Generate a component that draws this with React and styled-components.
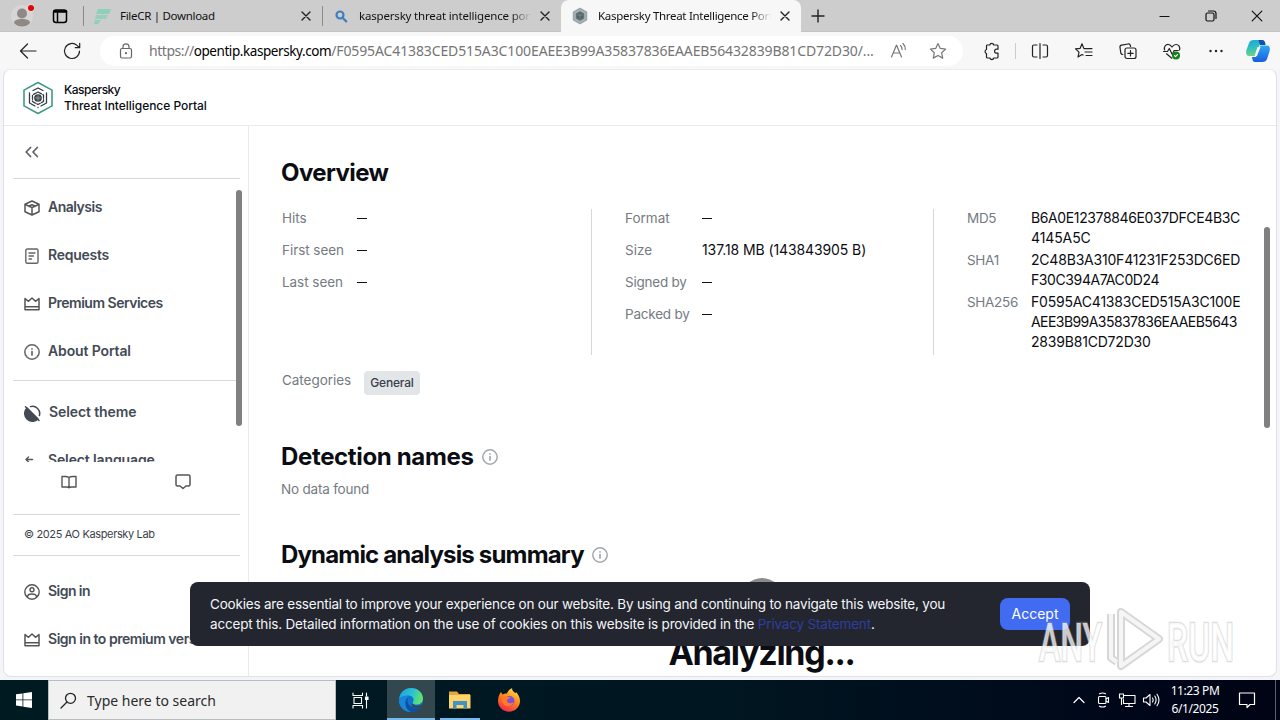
import React from "react";
import styled, { createGlobalStyle } from "styled-components";

const GlobalStyle = createGlobalStyle`
  * {
    box-sizing: border-box;
  }
  body {
    margin: 0;
    overflow: hidden;
    background-color: #f3f5f8;
  }
  svg {
    display: block;
    flex: none;
  }
`;

const Screen = styled.div`
  width: 1280px;
  height: 720px;
  display: flex;
  flex-direction: column;
  font-family: "Inter", "Liberation Sans", sans-serif;
  color: #0b0d12;
`;

/* ---------- browser ---------- */
const TabStrip = styled.div`
  height: 32px;
  display: flex;
  background-color: #cdcdcd;
  border-bottom: 1px solid #c4c4c4;
  font-family: "Noto Sans", "Open Sans", sans-serif;
  font-size: 11.5px;
  color: #111;
`;
const StripButtons = styled.div`
  width: 83px;
  display: flex;
  align-items: center;
  padding-left: 10px;
  gap: 16px;
`;
const Tab = styled.div`
  width: ${(p) => p.$w}px;
  height: 32px;
  display: flex;
  align-items: center;
  padding: 0 8px 0 ${(p) => p.$pad}px;
  background-color: ${(p) => (p.$active ? "#f7f7f7" : "transparent")};
  border-radius: 8px 8px 0 0;
`;
const TabDivider = styled.div`
  width: 1px;
  height: 20px;
  margin-top: 6px;
  background-color: #8a8a8a;
`;
const TabTitle = styled.span`
  flex: 1;
  margin: 0 6px 0 9px;
  line-height: 18px;
  overflow: hidden;
  white-space: nowrap;
  letter-spacing: ${(p) => p.$ls || 0}px;
  ${(p) =>
    p.$fade &&
    "mask-image: linear-gradient(to right, #000 calc(100% - 20px), transparent);"}
`;
const NewTab = styled.div`
  width: 34px;
  display: flex;
  align-items: center;
  justify-content: center;
`;
const WindowButtons = styled.div`
  margin-left: auto;
  display: flex;
  align-items: center;
`;
const WindowButton = styled.div`
  width: 46px;
  display: flex;
  justify-content: center;
`;
const Toolbar = styled.div`
  height: 37px;
  display: flex;
  align-items: center;
  padding-left: 16px;
  background-color: #f7f7f7;
`;
const NavButtons = styled.div`
  width: 84px;
  flex: none;
  display: flex;
  gap: 20px;
`;
const AddressBar = styled.div`
  width: 863px;
  flex: none;
  height: 30px;
  display: flex;
  align-items: center;
  padding: 0 15px 0 16px;
  border-radius: 15px;
  background-color: #fff;
  font-family: "Noto Sans", "Open Sans", sans-serif;
  font-size: 14px;
  color: #757575;
`;
const Url = styled.span`
  width: 730px;
  margin-left: 13px;
  white-space: nowrap;
  letter-spacing: ${(p) => p.$ls}px;
`;
const UrlScheme = styled.span`
  letter-spacing: -0.45px;
`;
const UrlHost = styled.span`
  font-size: 13.5px;
  letter-spacing: -0.42px;
  color: #000;
`;
const AddressIcons = styled.div`
  display: flex;
  gap: 20px;
  margin-left: auto;
`;
const ToolIcons = styled.div`
  display: flex;
  align-items: center;
  padding-left: 6px;
`;
const ToolCell = styled.div`
  width: ${(p) => p.$w || 44}px;
  display: flex;
  justify-content: center;
`;
const ToolDivider = styled.div`
  width: 1px;
  height: 16px;
  margin: 0 2px;
  background-color: #ccc;
`;

/* ---------- portal page ---------- */
const Page = styled.div`
  position: relative;
  height: 608px;
  margin: 0 3px 3px 3px;
  display: flex;
  flex-direction: column;
  border: 1px solid #dfe1e4;
  border-top-color: #ececec;
  border-radius: 8px;
  background-color: #fff;
  overflow: hidden;
`;
const Header = styled.div`
  height: 56px;
  flex: none;
  display: flex;
  align-items: center;
  gap: 10px;
  padding-left: 18px;
  border-bottom: 1px solid #e9eaec;
  font-size: 12px;
  font-weight: 500;
  line-height: 16px;
`;
const Brand = styled.div`
  letter-spacing: ${(p) => p.$ls}px;
`;
const Body = styled.div`
  flex: 1;
  display: flex;
  min-height: 0;
`;
const Sidebar = styled.div`
  width: 245px;
  flex: none;
  padding: 0 8px 0 9px;
  display: flex;
  flex-direction: column;
  border-right: 1px solid #e9eaec;
`;
const Collapse = styled.div`
  height: 53px;
  flex: none;
  display: flex;
  align-items: center;
  padding-left: 12px;
  border-bottom: 1px solid #d5d8da;
`;
const Menu = styled.div`
  height: 283px;
  flex: none;
  padding-top: 5px;
  overflow: hidden;
`;
const MenuItem = styled.div`
  height: 48px;
  display: flex;
  align-items: center;
  gap: 8px;
  padding-left: 11px;
`;
const MenuText = styled.span`
  padding-bottom: 2px;
  font-size: 14px;
  font-weight: 600;
  line-height: 20px;
  letter-spacing: ${(p) => p.$ls || 0}px;
  white-space: nowrap;
  color: #434a54;
`;
const Line = styled.div`
  height: 1px;
  margin: 4px 0 8px;
  background-color: #d5d8da;
`;
const HelpRow = styled.div`
  height: 53px;
  flex: none;
  display: flex;
  gap: 98px;
  padding: 12px 0 0 48px;
  border-bottom: 1px solid #d5d8da;
`;
const Copyright = styled.div`
  height: 41px;
  flex: none;
  padding: 0 0 2px 11px;
  display: flex;
  align-items: center;
  border-bottom: 1px solid #d5d8da;
  font-size: 11px;
  letter-spacing: ${(p) => p.$ls}px;
  color: #3c424b;
`;
const Account = styled.div`
  padding-top: 12px;
`;
const Main = styled.div`
  flex: 1;
  padding: 31px 34px 0 32px;
`;
const Title = styled.h2`
  margin: 0;
  display: flex;
  align-items: center;
  gap: 8px;
  font-size: 24px;
  font-weight: 700;
  line-height: 32px;
  letter-spacing: ${(p) => p.$ls || 0}px;
`;
const Columns = styled.div`
  display: flex;
  height: 146px;
  margin-top: 20px;
`;
const Column = styled.div`
  width: ${(p) => p.$w}px;
  padding-left: ${(p) => p.$pad || 0}px;
  border-right: ${(p) => (p.$last ? "none" : "1px solid #d5d8da")};
`;
const Field = styled.div`
  display: flex;
  margin: -1px 0 ${(p) => p.$gap + 1}px;
  font-size: 14px;
  line-height: 20px;
`;
const Label = styled.span`
  width: ${(p) => p.$w}px;
  flex: none;
  padding-left: ${(p) => p.$pad || 0}px;
  letter-spacing: ${(p) => p.$ls || 0}px;
  font-size: 13.5px;
  color: #757b82;
`;
const Value = styled.span`
  white-space: nowrap;
  letter-spacing: ${(p) => p.$ls || 0}px;
`;
const HashLine = styled.div`
  height: 20px;
  white-space: nowrap;
  letter-spacing: ${(p) => p.$ls || 0}px;
`;
const Dash = styled.i`
  width: 10px;
  height: 1px;
  margin-top: 10px;
  background-color: #111;
`;
const Categories = styled.div`
  height: 24px;
  margin-top: 16px;
  display: flex;
  line-height: 18px;
`;
const Tag = styled.span`
  height: 24px;
  width: 56px;
  text-align: center;
  border-radius: 4px;
  background-color: #e3e6e9;
  font-size: 12px;
  font-weight: 500;
  line-height: 24px;
  letter-spacing: ${(p) => p.$ls}px;
  color: #3a404a;
`;
const Section = styled.div`
  margin-top: ${(p) => p.$top}px;
`;
const Empty = styled.div`
  margin-top: 6px;
  font-size: 13.5px;
  line-height: 20px;
  letter-spacing: ${(p) => p.$ls}px;
  color: #757b82;
`;
const Progress = styled.div`
  margin-top: 7px;
  display: flex;
  flex-direction: column;
  align-items: center;
  font-size: 34px;
  font-weight: 700;
  line-height: 48px;
  letter-spacing: ${(p) => p.$ls}px;
`;
const Spinner = styled.div`
  width: 40px;
  height: 40px;
  margin-bottom: 11px;
  border-radius: 50%;
  background-color: #8b8b8d;
`;
const Scrollbar = styled.div`
  position: absolute;
  left: ${(p) => p.$x}px;
  top: ${(p) => p.$y}px;
  width: 6px;
  height: ${(p) => p.$h}px;
  border-radius: 3px;
  background-color: #808080;
`;
const CookieBanner = styled.div`
  position: absolute;
  left: 186px;
  top: 512px;
  width: 900px;
  height: 64px;
  display: flex;
  align-items: center;
  justify-content: space-between;
  padding: 0 20px;
  border-radius: 8px;
  background-color: #23262f;
  color: #f4f5f7;
  font-size: 13.5px;
  line-height: 20px;
`;
const CookieText = styled.div`
  padding-bottom: 1px;
`;
const CookieLine = styled.div`
  white-space: nowrap;
  letter-spacing: ${(p) => p.$ls}px;
  a {
    color: #303da0;
  }
`;
const Accept = styled.button`
  width: 70px;
  height: 32px;
  padding: 0 0 2px;
  border: none;
  border-radius: 8px;
  background-color: #416cf1;
  color: #fff;
  font-family: inherit;
  font-size: 14px;
`;
const Watermark = styled.div`
  position: absolute;
  left: 1034px;
  top: 604px;
`;

/* ---------- taskbar ---------- */
const Taskbar = styled.div`
  height: 40px;
  display: flex;
  background: linear-gradient(to right, #001a22, #001721 55%, #000619 90%, #000414);
  font-family: "Noto Sans", "Open Sans", sans-serif;
`;
const TaskButton = styled.div`
  width: ${(p) => p.$w || 49}px;
  height: 40px;
  display: flex;
  align-items: center;
  justify-content: center;
  background-color: ${(p) => (p.$active ? "#33474e" : "transparent")};
  box-shadow: ${(p) => (p.$open ? "inset 0 -2px 0 #76b9ed" : "none")};
`;
const Search = styled.div`
  width: 288px;
  height: 40px;
  display: flex;
  align-items: center;
  gap: 10px;
  padding-left: 11px;
  background-color: #f1f1f1;
  border: 1px solid #b8bdbf;
  font-size: 14px;
  color: #2b2b2b;
`;
const Gap = styled.div`
  width: ${(p) => p.$w}px;
`;
const Tray = styled.div`
  margin-left: auto;
  display: flex;
  align-items: center;
  padding-right: 4px;
`;
const TrayIcon = styled.div`
  width: 24px;
  display: flex;
  justify-content: center;
`;
const Clock = styled.div`
  width: 64px;
  text-align: center;
  font-size: 12px;
  line-height: 18px;
  letter-spacing: ${(p) => p.$ls}px;
  color: #fff;
  white-space: nowrap;
`;
const ShowDesktop = styled.div`
  width: 1px;
  height: 40px;
  background-color: #5b606b;
`;

const Icon = ({ w = 18, h, c = "#222", s = 1.2, children }) => (
  <svg
    width={w}
    height={h || w}
    viewBox={`0 0 ${w} ${h || w}`}
    fill="none"
    stroke={c}
    strokeWidth={s}
    strokeLinecap="round"
    strokeLinejoin="round"
  >
    {children}
  </svg>
);

const CloseIcon = () => (
  <Icon w={16} s={1.4}>
    <path d="M4 4l8 8M12 4l-8 8" />
  </Icon>
);
const HexFavicon = () => (
  <Icon w={18} c="#9aa6aa" s={1.5}>
    <path d="M9 1.500l6.500 3.700v7.600L9 16.500l-6.500-3.700V5.200z" fill="#a9b7bb" />
    <path d="M9 5l3.500 2v4L9 13l-3.500-2V7z" fill="#4e5c63" stroke="#64737a" />
    <path d="M7 8h4M9 8v3" stroke="#8b989d" strokeWidth=".8" />
  </Icon>
);
const InfoIcon = ({ c = "#a3a8ad" }) => (
  <Icon w={16} c={c} s={1.5}>
    <circle cx="8" cy="8" r="7.200" />
    <path d="M8 7.600v3.400M8 4.900v.1" strokeWidth="1.700" />
  </Icon>
);
const CrownIcon = () => (
  <Icon w={16} c="#555" s={1.5}>
    <path d="M1 2.500v11.300h14V2.500l-3.500 2.800L8 2 4.500 5.300zM1 10.800h14" />
  </Icon>
);

const BrowserTabs = () => (
  <TabStrip>
    <StripButtons>
      <Icon w={24}>
        <g stroke="none">
          <circle cx="12" cy="12" r="11" fill="#d6d6d6" />
          <circle cx="12" cy="9.500" r="5" fill="#8f8986" />
          <path d="M4 19c0-3 3.500-4 8-4s8 1 8 4c-2 2.500-5 3.500-8 3.500S6 21.500 4 19z" fill="#8f8986" />
          <circle cx="21" cy="4" r="4" fill="#e6d6d6" />
          <circle cx="21" cy="4" r="3" fill="#df0707" />
        </g>
      </Icon>
      <Icon w={20} s={1.5} c="#000">
        <rect x="3.500" y="4" width="13" height="12.500" rx="2.500" />
        <path d="M4.500 5.500h11.500" strokeWidth="2.600" />
        <path d="M7.500 7v9" />
      </Icon>
    </StripButtons>
    <TabDivider />
    <Tab $w={238} $pad={10}>
      <Icon w={17}>
        <g stroke="none" fill="#8ed0b8">
          <path d="M4 1h13l-2 5H2z" />
          <path d="M2 7h12l-2 4H1z" opacity=".85" />
          <path d="M1 12h6l-3 4H0z" />
        </g>
      </Icon>
      <TabTitle $ls={-0.3}>FileCR | Download</TabTitle>
      <CloseIcon />
    </Tab>
    <TabDivider />
    <Tab $w={238} $pad={10}>
      <Icon w={17} c="#3f7fc0" s={2.2}>
        <circle cx="7" cy="7" r="3.500" />
        <path d="M9.800 10l3.400 3.400" />
      </Icon>
      <TabTitle $fade $ls={-0.18}>
        kaspersky threat intelligence portal
      </TabTitle>
      <CloseIcon />
    </Tab>
    <Tab $w={240} $pad={10} $active>
      <HexFavicon />
      <TabTitle $fade $ls={-0.3}>
        Kaspersky Threat Intelligence Portal
      </TabTitle>
      <CloseIcon />
    </Tab>
    <NewTab>
      <Icon w={16} s={1.4}>
        <path d="M8 2v12M2 8h12" />
      </Icon>
    </NewTab>
    <WindowButtons>
      <WindowButton>
        <Icon w={12} c="#111">
          <path d="M1 6.500h9" />
        </Icon>
      </WindowButton>
      <WindowButton>
        <Icon w={12} c="#111">
          <rect x="1" y="3" width="8" height="8" rx="1.500" />
          <path d="M3.500 1h5a2.500 2.500 0 0 1 2.500 2.500v5" />
        </Icon>
      </WindowButton>
      <WindowButton>
        <Icon w={12} c="#111">
          <path d="M1.200 1.200l9.600 9.600M10.800 1.200L1.200 10.800" />
        </Icon>
      </WindowButton>
    </WindowButtons>
  </TabStrip>
);

const BrowserToolbar = () => (
  <Toolbar>
    <NavButtons>
      <Icon w={24}>
        <path d="M4.500 12h15.500M11.500 5l-7 7 7 7" />
      </Icon>
      <Icon w={24}>
        <path d="M19.500 12a7.500 7.500 0 1 1-2.500-5.600l2.500 2.200M19.700 4.300v4.400h-4.400" />
      </Icon>
    </NavButtons>
    <AddressBar>
      <Icon w={20} c="#666">
        <rect x="4.500" y="7.500" width="11" height="9.500" rx="1.500" />
        <path d="M7 7.500V5.800a3 3 0 0 1 6 0v1.700" />
        <circle cx="10" cy="12.200" r=".5" />
      </Icon>
      <Url $ls={-0.12}>
        <UrlScheme>https://</UrlScheme>
        <UrlHost>opentip.kaspersky.com</UrlHost>
        /F0595AC41383CED515A3C100EAEE3B99A35837836EAAEB56432839B81CD72D30/...
      </Url>
      <AddressIcons>
        <Icon w={20} c="#777">
          <path d="M3.500 16L8.500 4l5 12M5.200 12h6.600M12.500 4.500a5 5 0 0 1 1.500 4M15 2.500a8 8 0 0 1 2.300 6" />
        </Icon>
        <Icon w={20} c="#777">
          <path d="M10 2.500l2.300 4.900 5.300.7-3.900 3.700 1 5.300L10 14.500l-4.700 2.600 1-5.300L2.400 8.100l5.300-.7z" />
        </Icon>
      </AddressIcons>
    </AddressBar>
    <ToolIcons>
      <ToolCell>
        <Icon w={20}>
          <path d="M6 4h2.800a2 2 0 0 1 3.900 0H16a1 1 0 0 1 1 1v3.200h-1a2 2 0 1 0 0 3.900h1V16a1 1 0 0 1-1 1h-3.200a2 2 0 0 1-3.900 0H6.500a1 1 0 0 1-1-1v-3.500a2.100 2.100 0 0 1 0-4V5a1 1 0 0 1 .5-1z" />
        </Icon>
      </ToolCell>
      <ToolDivider />
      <ToolCell>
        <Icon w={20}>
          <path d="M7 4H4a1.500 1.500 0 0 0-1.500 1.500v9A1.500 1.500 0 0 0 4 16h3M13 4h3a1.500 1.500 0 0 1 1.500 1.500v9A1.500 1.500 0 0 1 16 16h-3M10 2.500v15" />
        </Icon>
      </ToolCell>
      <ToolCell>
        <Icon w={20}>
          <path d="M12 7.600H9.900L8 2.800 6.200 7.300l-4.700.6 3.500 3.200-1 4.900L8 13.500l1 .6M12.500 7.600H18M11 11h7M12 14.500h6" />
        </Icon>
      </ToolCell>
      <ToolCell>
        <Icon w={20}>
          <path d="M4.800 13.500a2 2 0 0 1-2-1.500L2 6.500A2 2 0 0 1 3.600 4.200l6.500-1.200a2 2 0 0 1 2.300 1.600l.2.900" />
          <rect x="7" y="7" width="11" height="10.500" rx="2" />
          <path d="M12.500 9.500v5.500M9.800 12.300h5.400" />
        </Icon>
      </ToolCell>
      <ToolCell>
        <Icon w={20}>
          <path d="M2.600 9C1.500 5.500 4 3.200 6.500 3.500 8.300 3.700 9.300 5 10 6c.8-1.100 2-2.500 4-2.500 2.600 0 4.500 2.600 3.500 5.500M1.500 10.500h4l1.800-3 3 6 1.900-4h4M4.500 12.800l5.300 4.400" />
          <circle cx="14" cy="14.500" r="4" fill="#16821c" stroke="none" />
          <path d="M12.500 14.700l1 1 2-2" stroke="#fff" />
        </Icon>
      </ToolCell>
      <ToolCell>
        <Icon w={20} c="none">
          <g fill="#222">
            <circle cx="4.500" cy="10" r="1.200" />
            <circle cx="10" cy="10" r="1.200" />
            <circle cx="15.500" cy="10" r="1.200" />
          </g>
        </Icon>
      </ToolCell>
      <ToolCell $w={40}>
        <svg width="24" height="24" viewBox="0 0 24 24">
          <defs>
            <linearGradient id="copA" x1="0" y1="0" x2="0.200" y2="1">
              <stop offset="0" stopColor="#18a5e8" />
              <stop offset=".6" stopColor="#35c3b6" />
              <stop offset="1" stopColor="#6fd284" />
            </linearGradient>
            <linearGradient id="copB" x1="0" y1="0" x2="0" y2="1">
              <stop offset="0" stopColor="#2fa9f4" />
              <stop offset="1" stopColor="#175ee0" />
            </linearGradient>
          </defs>
          <path d="M8 1h8c2 0 3 1.500 3.500 4H14L9.500 17H3c-3 0-3.300-3-2.500-6L3 4c.7-2 2-3 5-3z" fill="url(#copA)" />
          <path d="M12.500 1H16c2 0 3 1.500 3.500 5H14z" fill="#1450a8" />
          <path d="M16 23H9c-2 0-2.700-2-3-5h4l4.500-11.500H21c3 0 3.300 3 2.500 6L21 20c-.7 2-2 3-5 3z" fill="url(#copB)" />
          <path d="M11.500 8h3L11 17H8.500z" fill="#f4faff" />
        </svg>
      </ToolCell>
    </ToolIcons>
  </Toolbar>
);

const PortalSidebar = () => (
  <Sidebar>
    <Collapse>
      <Icon w={14} c="#60656b" s={1.8}>
        <path d="M5.500 2.500L1.200 7l4.300 4.500M12.300 2.500L8 7l4.300 4.500" />
      </Icon>
    </Collapse>
    <Menu>
      <MenuItem>
        <Icon w={16} c="#555" s={1.5}>
          <path d="M8 1l7 3.300v7.400L8 15l-7-3.300V4.300zM4.500 6L8 7.600 11.500 6M8 7.600V15M1.500 4.500L4.500 6M14.500 4.500L11.500 6M5 6l3-1.300L11 6" />
        </Icon>
        <MenuText $ls={-0.5}>Analysis</MenuText>
      </MenuItem>
      <MenuItem>
        <Icon w={16} c="#666" s={1.4}>
          <rect x="1.800" y="1" width="12.200" height="14.300" rx="1.500" />
          <path d="M5 5h6M5 8h4.500M5 11h2.500" />
        </Icon>
        <MenuText $ls={-0.27}>Requests</MenuText>
      </MenuItem>
      <MenuItem>
        <CrownIcon />
        <MenuText $ls={-0.5}>Premium Services</MenuText>
      </MenuItem>
      <MenuItem>
        <InfoIcon c="#60656b" />
        <MenuText $ls={-0.13}>About Portal</MenuText>
      </MenuItem>
      <Line />
      <MenuItem>
        <Icon w={17} c="#434a54" s={1.5}>
          <path d="M6.500 1.600A7.200 7.200 0 0 1 15.400 10.500" />
          <path d="M3 3A7.500 7.500 0 0 0 14 14z" fill="#434a54" />
          <path d="M1.500 1.800L15 15.500" />
        </Icon>
        <MenuText $ls={-0.1}>Select theme</MenuText>
      </MenuItem>
      <MenuItem>
        <Icon w={16} c="#555" s={1.4}>
          <path d="M2 6.500h6.500M4.500 4L2 6.500 4.500 9" />
        </Icon>
        <MenuText $ls={-0.13}>Select language</MenuText>
      </MenuItem>
    </Menu>
    <HelpRow>
      <Icon w={16} c="#555" s={1.4}>
        <path d="M8 3.500C7 2.800 6 2.500 4.500 2.500H1v10.500h4.500c1 0 2 .3 2.500.7.500-.4 1.500-.7 2.500-.7H15V2.500h-3.500C10 2.500 9 2.800 8 3.500v10" />
      </Icon>
      <Icon w={16} c="#555" s={1.5}>
        <path d="M2.500 1h11A1.500 1.500 0 0 1 15 2.500v8a1.500 1.500 0 0 1-1.500 1.500H11l-3 2.500L5 12H2.500A1.500 1.500 0 0 1 1 10.500v-8A1.500 1.500 0 0 1 2.500 1z" />
      </Icon>
    </HelpRow>
    <Copyright $ls={-0.36}>© 2025 AO Kaspersky Lab</Copyright>
    <Account>
      <MenuItem>
        <Icon w={16} c="#555" s={1.4}>
          <circle cx="8" cy="8" r="7.200" />
          <circle cx="8" cy="5.700" r="2" />
          <path d="M3.500 12.700c0-2.200 2-2.700 4.500-2.700s4.500.5 4.500 2.700" />
        </Icon>
        <MenuText $ls={-0.55}>Sign in</MenuText>
      </MenuItem>
      <MenuItem>
        <CrownIcon />
        <MenuText $ls={-0.48}>Sign in to premium version</MenuText>
      </MenuItem>
    </Account>
  </Sidebar>
);

const hashes = [
  { name: "MD5", lines: [["B6A0E12378846E037DFCE4B3C", -0.38], ["4145A5C", -0.1]] },
  {
    name: "SHA1",
    lines: [["2C48B3A310F41231F253DC6ED", -0.2], ["F30C394A7AC0D24", -0.4]],
  },
  {
    name: "SHA256",
    lines: [
      ["F0595AC41383CED515A3C100E", -0.2],
      ["AEE3B99A35837836EAAEB5643", -0.56],
      ["2839B81CD72D30", -0.2],
    ],
  },
];

const Report = () => (
  <Main>
    <Title $ls={-0.6}>Overview</Title>
    <Columns>
      <Column $w={311}>
        {["Hits", "First seen", "Last seen"].map((name) => (
          <Field key={name} $gap={12}>
            <Label $w={76} $pad={1} $ls={-0.05}>
              {name}
            </Label>
            <Dash />
          </Field>
        ))}
      </Column>
      <Column $w={342} $pad={33}>
        <Field $gap={12}>
          <Label $w={77}>Format</Label>
          <Dash />
        </Field>
        <Field $gap={12}>
          <Label $w={77}>Size</Label>
          <Value $ls={-0.1}>137.18 MB (143843905 B)</Value>
        </Field>
        <Field $gap={12}>
          <Label $w={77} $ls={-0.22}>
            Signed by
          </Label>
          <Dash />
        </Field>
        <Field $gap={12}>
          <Label $w={77} $ls={-0.22}>
            Packed by
          </Label>
          <Dash />
        </Field>
      </Column>
      <Column $w={308} $pad={33} $last>
        {hashes.map((hash) => (
          <Field key={hash.name} $gap={2}>
            <Label $w={64} $ls={-0.3}>
              {hash.name}
            </Label>
            <div>
              {hash.lines.map(([text, ls]) => (
                <HashLine key={text} $ls={ls}>
                  {text}
                </HashLine>
              ))}
            </div>
          </Field>
        ))}
      </Column>
    </Columns>
    <Categories>
      <Label $w={83} $pad={1} $ls={-0.05}>
        Categories
      </Label>
      <Tag $ls={-0.2}>General</Tag>
    </Categories>
    <Section $top={46}>
      <Title $ls={-0.35}>
        Detection names <InfoIcon />
      </Title>
      <Empty $ls={-0.2}>No data found</Empty>
    </Section>
    <Section $top={40}>
      <Title $ls={-0.83}>
        Dynamic analysis summary <InfoIcon />
      </Title>
    </Section>
    <Progress $ls={-1.3}>
      <Spinner />
      Analyzing...
    </Progress>
  </Main>
);

const Portal = () => (
  <Page>
    <Header>
      <Icon w={32} h={34} c="#3d9a86" s={1.6}>
        <path d="M16 1.500l14 7.600v15.800L16 32.500 2 24.900V9.100z" />
        <g stroke="#333c40" strokeWidth="1.300">
          <path d="M11 9.500l5-2.500 5 2.500M24.500 12v10L19 25M7.500 12v10l5.500 3M16 26.500v.1" />
          <path d="M16 11l5.500 3v6.500L16 23.500l-5.500-3V14z" strokeDasharray="4 1.500" />
          <circle cx="16" cy="17" r="3.200" fill="#4b5559" />
          <path d="M16 14v6M13 17h6" stroke="#a7afb1" strokeWidth=".6" />
        </g>
      </Icon>
      <div>
        <Brand $ls={-0.5}>Kaspersky</Brand>
        <Brand $ls={-0.04}>Threat Intelligence Portal</Brand>
      </div>
    </Header>
    <Body>
      <PortalSidebar />
      <Report />
    </Body>
    <Scrollbar $x={232} $y={120} $h={236} />
    <Scrollbar $x={1260} $y={157} $h={201} />
    <CookieBanner>
      <CookieText>
        <CookieLine $ls={-0.2}>
          Cookies are essential to improve your experience on our website. By using and
          continuing to navigate this website, you
        </CookieLine>
        <CookieLine $ls={-0.18}>
          accept this. Detailed information on the use of cookies on this website is
          provided in the <a>Privacy Statement</a>.
        </CookieLine>
      </CookieText>
      <Accept>Accept</Accept>
    </CookieBanner>
  </Page>
);

const WindowsTaskbar = () => (
  <Taskbar>
    <TaskButton $w={48}>
      <svg width="16" height="16" viewBox="0 0 16 16" fill="#fff">
        <path d="M0 2.300l6.500-.9v6.100H0zM7.300 1.300L16 0v7.500H7.300zM0 8.300h6.500v6.200L0 13.600zM7.300 8.300H16V16l-8.700-1.300z" />
      </svg>
    </TaskButton>
    <Search>
      <Icon w={17} c="#222" s={1.3}>
        <circle cx="10.500" cy="6.300" r="5" />
        <path d="M7 10l-6 6" />
      </Icon>
      Type here to search
    </Search>
    <Gap $w={3} />
    <TaskButton $w={42}>
      <Icon w={17} c="#fff" s={1.1}>
        <path d="M1 1v2.500h9.500V1M1 16v-2.500h9.500V16M2 5.500h7.500v6H2zM14.500 1v3M14.500 8v8" />
        <rect x="13.500" y="5" width="2.500" height="2.500" fill="#fff" />
      </Icon>
    </TaskButton>
    <Gap $w={6} />
    <TaskButton $w={48} $active $open>
      <svg width="26" height="26" viewBox="0 0 26 26">
        <defs>
          <linearGradient id="edgeTop" x1="0" y1="0" x2="1" y2=".3">
            <stop offset="0" stopColor="#1e9de0" />
            <stop offset=".6" stopColor="#2cc3d2" />
            <stop offset="1" stopColor="#5fe071" />
          </linearGradient>
        </defs>
        <circle cx="13" cy="13" r="12" fill="#1273cf" />
        <path d="M1.200 12C2 5 7 1 13 1c7 0 12 5 12 10.500 0 4-3 6-6.500 6-3 0-4.500-1.200-3.500-2.500 2-3-.5-6.500-4.500-6.500C6 8.500 2.500 10 1.200 12z" fill="url(#edgeTop)" />
        <path d="M10 9c-4 3-4 12 4 15.500C7 26 1 20 1 13.500 2.500 10 6 8.500 10 9z" fill="#1588dc" />
        <path d="M10 11c-2 5 1.500 11 12.500 9.500C19 25 15 25.500 13 25 7 22.500 5.500 14 10 11z" fill="#11509e" />
        <path d="M14.500 16.500c1.500 2.500 6 3 10 .5l-1.500 3.300c-4 1.200-8 .2-9.500-2.300z" fill="#33474e" />
      </svg>
    </TaskButton>
    <Gap $w={5} />
    <TaskButton $w={40} $open>
      <svg width="22" height="20" viewBox="0 0 22 20">
        <path d="M0 1.500h8l2 2.500h11v14H0z" fill="#e5a63a" />
        <path d="M0 5h21.500v13.500H0z" fill="#fcd469" />
        <path d="M4 11h14v7.500h-3.500v-3.500h-7v3.500H4z" fill="#3f93c8" />
      </svg>
    </TaskButton>
    <Gap $w={5} />
    <TaskButton $w={48}>
      <svg width="24" height="24" viewBox="0 0 24 24">
        <defs>
          <linearGradient id="fox" x1=".8" y1="0" x2=".3" y2="1">
            <stop offset="0" stopColor="#ffe34a" />
            <stop offset=".45" stopColor="#ff8a1d" />
            <stop offset="1" stopColor="#f2264f" />
          </linearGradient>
        </defs>
        <path d="M4 4l1.500 2.500C7 5.500 8.500 5.300 10 5.500 10.800 3.500 12.500 1 15 .3c0 2.500 2 3.500 3.500 5L19 4c2.500 2.500 4 5.500 4 9 0 6-5 10.700-11 10.700S1 19 1 13c0-3.500 1-6.500 3-9z" fill="url(#fox)" />
        <circle cx="12.500" cy="13" r="5" fill="#7a4fe0" />
        <path d="M5 8c3-.5 5 1 8.500 1-1 2-3.500 1.500-3.500 3.500 0 3 4.500 3.500 7 1.500-1 4-8 6-11 1.500C4.500 13 4.500 10 5 8z" fill="#ff7a22" />
      </svg>
    </TaskButton>
    <Tray>
      <TrayIcon>
        <Icon w={14} c="#fff">
          <path d="M2 9.500l5-5 5 5" />
        </Icon>
      </TrayIcon>
      <TrayIcon>
        <Icon w={16} c="#fff" s={1.1}>
          <rect x="3.500" y="4.500" width="7.500" height="7" rx="1" />
          <path d="M11 7l2.500-1.500v5L11 9M4.500 1.800q3-1.600 6 0M4.500 14.200q3 1.600 6 0" />
        </Icon>
      </TrayIcon>
      <TrayIcon>
        <Icon w={18} h={16} c="#fff" s={1.1}>
          <path d="M6 3.500h11v8H5.500V7.500M11 11.500v3M7.500 14.500h7M1.500 2h4v4h-4zM3.500 6v6.500" />
        </Icon>
      </TrayIcon>
      <TrayIcon>
        <Icon w={18} h={16} c="#fff" s={1.1}>
          <path d="M1.500 6v4h2.500l4 3.500v-11L4 6zM10.500 6q1.300 2 0 4M12.800 4q2.600 4 0 8M15 2.200q4 5.800 0 11.600" />
        </Icon>
      </TrayIcon>
      <Clock $ls={-0.4}>
        11:23 PM
        <br />
        6/1/2025
      </Clock>
      <TaskButton $w={40}>
        <Icon w={18} c="#fff" s={1.2}>
          <path d="M1.500 2h15v11.500H12L9 16.500 9 13.500H1.500z" />
        </Icon>
      </TaskButton>
      <Gap $w={8} />
      <ShowDesktop />
    </Tray>
  </Taskbar>
);

const AnyRunMark = () => (
  <Watermark>
    <svg width="204" height="72" viewBox="0 0 204 72">
      <g
        fill="#ffffff"
        fillOpacity=".75"
        stroke="#a8a8a8"
        strokeOpacity=".38"
        strokeWidth="2.500"
        paintOrder="stroke"
        fontFamily="Roboto, sans-serif"
        fontSize="53"
        fontWeight="500"
      >
        <text x="5" y="57" textLength="63" lengthAdjust="spacingAndGlyphs">
          ANY
        </text>
        <text x="133" y="57" textLength="67" lengthAdjust="spacingAndGlyphs">
          RUN
        </text>
      </g>
      <g fill="none" strokeLinejoin="round">
        <path d="M77 10v44l6 4M87 8l38 27-38 27z" stroke="#b0b0b0" strokeOpacity=".5" strokeWidth="8" />
        <path d="M77 10v44l6 4M87 8l38 27-38 27z" stroke="#fff" strokeOpacity=".75" strokeWidth="4" />
      </g>
    </svg>
  </Watermark>
);

export default function App() {
  return (
    <>
      <GlobalStyle />
      <Screen>
        <BrowserTabs />
        <BrowserToolbar />
        <Portal />
        <WindowsTaskbar />
      </Screen>
      <AnyRunMark />
    </>
  );
}
